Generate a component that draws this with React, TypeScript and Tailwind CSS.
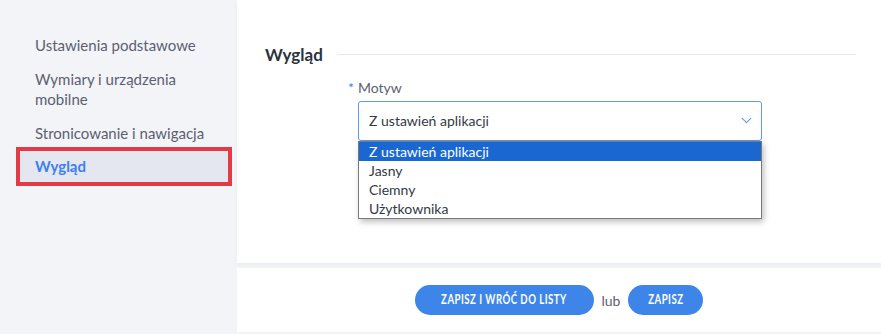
import { ChevronDown } from 'lucide-react'

const NAV_ITEMS = ['Ustawienia podstawowe', 'Wymiary i urządzenia mobilne', 'Stronicowanie i nawigacja']

const OPTIONS = ['Z ustawień aplikacji', 'Jasny', 'Ciemny', 'Użytkownika']

const Sidebar: React.FC = () => {
  return (
    <aside className="w-[237px] shrink-0 bg-[#f3f4f8] pt-[28px]">
      {NAV_ITEMS.map((item) => (
        <div key={item} className="pl-[35px] pr-[10px] py-[7px] text-[15px] leading-5 text-[#5b6170]">
          {item === 'Wymiary i urządzenia mobilne' ? (
            <>
              Wymiary i urządzenia
              <br />
              mobilne
            </>
          ) : (
            <span className="whitespace-nowrap">{item}</span>
          )}
        </div>
      ))}
      {/* active item, marked with the red frame */}
      <div className="ml-[16px] mr-[5px] -mt-[3px] h-[39px] border-4 border-[#e23b45] bg-[#e4e7f0] pl-[15px] flex items-center text-[15px] font-bold text-[#3d7ff0]">
        Wygląd
      </div>
    </aside>
  )
}

const ThemeSelect: React.FC = () => {
  return (
    <div className="relative w-[404px]">
      <div className="h-[40px] rounded-[3px] border border-[#5b9af0] bg-white flex items-center justify-between pl-[10px] pr-[6px] text-[14px] text-[#333a45]">
        Z ustawień aplikacji
        <ChevronDown className="h-[17px] w-[17px] text-[#5b9af0]" strokeWidth={1.6} />
      </div>
      {/* open option list */}
      <ul className="absolute left-0 top-[40px] w-[404px] border border-[#7a7a7a] bg-white shadow-[2px_3px_6px_rgba(0,0,0,0.25)] text-[14px] leading-[19px] text-[#333a45]">
        {OPTIONS.map((opt, i) => (
          <li
            key={opt}
            className={i === 0 ? 'bg-[#1a67d2] text-white pl-[10px]' : 'pl-[10px]'}
          >
            {opt}
          </li>
        ))}
      </ul>
    </div>
  )
}

const PillButton: React.FC<{ label: string; width: string }> = ({ label, width }) => {
  return (
    <button className={`h-[30px] ${width} rounded-full bg-[#3d85e8] text-white text-[13px] font-bold tracking-[0.05em] flex items-center justify-center`}>
      <span className="inline-block whitespace-nowrap scale-x-[0.74]">{label}</span>
    </button>
  )
}

export default function App() {
  return (
    <div className="flex h-[334px] w-[881px] overflow-hidden bg-[#f3f4f8] font-['Lato',sans-serif]">
      <Sidebar />
      <main className="flex flex-1 flex-col pb-[2px]">
        <section className="flex-1 bg-white pl-[28px] pr-[25px] pt-[42px] shadow-[0_2px_4px_rgba(0,0,0,0.04)]">
          <div className="flex items-center gap-[14px]">
            <h2 className="text-[17px] font-bold text-[#2b3240]">Wygląd</h2>
            <div className="h-px flex-1 bg-[#e6e8ec]" />
          </div>
          <div className="ml-[93px] mt-[9px]">
            <label className="-ml-[10px] flex items-center text-[14px] text-[#5b6170] mb-[3px]">
              <span className="text-[#3d7ff0] mr-[4px]">*</span>
              Motyw
            </label>
            <ThemeSelect />
          </div>
        </section>
        <footer className="mt-[5px] h-[64px] bg-white flex items-center justify-center gap-[6px]">
          <PillButton label="ZAPISZ I WRÓĆ DO LISTY" width="w-[179px]" />
          <span className="text-[14px] text-[#5b6170] mx-[2px]">lub</span>
          <PillButton label="ZAPISZ" width="w-[75px]" />
        </footer>
      </main>
    </div>
  )
}
